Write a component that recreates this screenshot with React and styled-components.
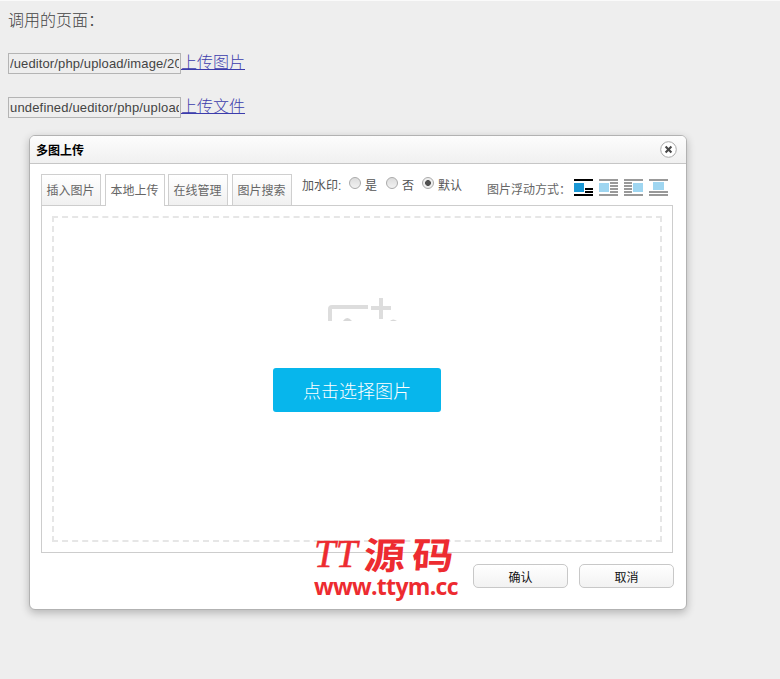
import React from "react";
import styled, { createGlobalStyle } from "styled-components";

const GlobalStyle = createGlobalStyle`
  * { box-sizing: border-box; }
  body {
    margin: 0;
    background: #eeeeee;
    font-family: "Liberation Sans", "Noto Sans CJK SC", sans-serif;
    overflow: hidden;
  }
`;

const Page = styled.main`
  position: relative;
  height: 679px;
  padding: 9px 8px;
  border-top: 1px solid #fafafa;
  color: #444;
`;

const Intro = styled.p`
  margin: 0 0 20px;
  height: 23px;
  font-size: 16px;
  line-height: 21px;
  font-weight: 300;
`;

const UploadRow = styled.div`
  display: flex;
  height: 21px;
  margin-bottom: 23px;
`;

const PathInput = styled.input`
  width: 173px;
  height: 21px;
  padding: 0 1px;
  border: 1px solid #b4b4b4;
  background: transparent;
  color: #444;
  font: 13px "Liberation Sans", sans-serif;
  letter-spacing: ${(p) => p.$tracking || "0"};
`;

const UploadLink = styled.a`
  font-size: 16px;
  font-weight: 300;
  line-height: 20px;
  color: #3c3cac;
  text-decoration: underline;
`;

const Dialog = styled.section`
  position: absolute;
  left: 29px;
  top: 134px;
  width: 658px;
  height: 475px;
  display: flex;
  flex-direction: column;
  background: #fff;
  border: 1px solid #b2b2b2;
  border-radius: 6px;
  box-shadow: 0 3px 8px rgba(0, 0, 0, 0.24);
`;

const TitleBar = styled.header`
  display: flex;
  align-items: center;
  justify-content: space-between;
  flex: none;
  height: 28px;
  padding: 0 9px 0 6px;
  border-bottom: 1px solid #c6c6c6;
  border-radius: 5px 5px 0 0;
  background: linear-gradient(#fdfdfd, #f0f0f0);
`;

const Title = styled.h1`
  margin: 0;
  padding-top: 2px;
  color: #000;
  font-size: 12px;
  font-weight: 700;
  line-height: 18px;
`;

const CloseButton = styled.button`
  display: flex;
  width: 17px;
  height: 17px;
  padding: 0;
  border: 0;
  background: none;
  svg { width: 17px; height: 17px; }
`;

const Body = styled.div`
  display: flex;
  flex-direction: column;
  padding: 10px 13px 0 11px;
`;

const TabStrip = styled.nav`
  display: flex;
  height: 31px;
`;

const Tab = styled.button`
  flex: none;
  width: 60px;
  height: ${(p) => (p.$active ? 32 : 31)}px;
  margin-right: ${(p) => p.$gap || 4}px;
  padding: ${(p) => (p.$active ? 0 : 2)}px 1px 0 0;
  border: 1px solid #cfcfcf;
  border-bottom: 0;
  background: ${(p) => (p.$active ? "#fff" : "linear-gradient(#fff, #f0f0f0)")};
  color: #666;
  font: 12px "Liberation Sans", "Noto Sans CJK SC", sans-serif;
  line-height: 28px;
  white-space: nowrap;
  position: relative;
  z-index: 1;
`;

const Watermark = styled.div`
  display: flex;
  height: 22px;
  margin-left: 6px;
  color: #555;
  font-size: 12px;
  line-height: 24px;
`;

const OptionCaption = styled.span`
  width: 47px;
`;

const Choice = styled.label`
  display: flex;
  width: ${(p) => p.$width}px;
  gap: 4px;
  white-space: nowrap;
`;

const Radio = styled.span`
  flex: none;
  width: 12px;
  height: 12px;
  margin-top: 3px;
  border: 1px solid #aaa;
  border-radius: 50%;
  background: ${(p) =>
    p.$checked
      ? "radial-gradient(circle, #505050 0 2.6px, #eee 3.2px)"
      : "linear-gradient(#dcdcdc, #f2f2f2)"};
`;

const FloatBar = styled.div`
  display: flex;
  margin-left: auto;
  padding-right: 5px;
  color: #666;
  font-size: 12px;
  line-height: 32px;
`;

const FloatCaption = styled.span`
  width: 87px;
  white-space: nowrap;
`;

const FloatIcons = styled.div`
  display: flex;
  gap: 6px;
  padding-top: 5px;
  svg { width: 19px; height: 17px; }
`;

const Panel = styled.div`
  width: 632px;
  height: 348px;
  padding: 10px;
  border: 1px solid #cdcdcd;
`;

const DropZone = styled.div`
  height: 326px;
  display: flex;
  flex-direction: column;
  align-items: center;
  padding-top: 79px;
  border: 2px dashed #e6e6e6;
`;

const Artwork = styled.svg`
  width: 70px;
  height: 26px;
  margin-left: 11px;
`;

const SelectButton = styled.button`
  width: 168px;
  height: 44px;
  margin-top: 45px;
  padding: 0 0 1px;
  border: 0;
  border-radius: 3px;
  background: #07b6ec;
  color: #fff;
  font: 300 18px "Noto Sans CJK SC", sans-serif;
`;

const Actions = styled.footer`
  display: flex;
  justify-content: flex-end;
  gap: 11px;
  padding: 11px 12px 0 0;
`;

const ActionButton = styled.button`
  width: 95px;
  height: 24px;
  padding: 0;
  border: 1px solid #c8c8c8;
  border-radius: 5px;
  background: linear-gradient(#fff, #f2f2f2);
  color: #111;
  font: 12px "Noto Sans CJK SC", sans-serif;
`;

const Stamp = styled.div`
  position: absolute;
  left: 314px;
  top: 534px;
  width: 146px;
  color: #ed2b30;
`;

const StampName = styled.div`
  display: flex;
  height: 39px;
  white-space: nowrap;
`;

const StampLatin = styled.span`
  width: 50px;
  font: italic 39px/38px "Liberation Serif", serif;
  -webkit-text-stroke: 0.5px #ed2b30;
`;

const StampHan = styled.span`
  font-family: "Noto Sans CJK SC", sans-serif;
  font-size: 37px;
  font-weight: 700;
  letter-spacing: 6px;
  line-height: 37px;
  transform: skewX(-4deg) scaleX(1.12);
  transform-origin: left center;
`;

const StampUrl = styled.div`
  font: 700 23px/24px "Open Sans", sans-serif;
  letter-spacing: -0.7px;
  white-space: nowrap;
`;

const floatModes = [
  {
    name: "default",
    line: "#000",
    fill: "#1b98d5",
    image: [0, 4, 10, 9],
    bars: [[0, 0, 19], [11, 9, 8], [11, 12, 8], [0, 15, 19]],
  },
  {
    name: "left",
    line: "#999",
    fill: "#9fd6f1",
    image: [0, 4, 10, 9],
    bars: [[0, 0, 19], [11, 3, 8], [11, 6, 8], [11, 9, 8], [11, 12, 8], [0, 15, 19]],
  },
  {
    name: "right",
    line: "#999",
    fill: "#9fd6f1",
    image: [9, 4, 10, 9],
    bars: [[0, 0, 19], [0, 3, 8], [0, 6, 8], [0, 9, 8], [0, 12, 8], [0, 15, 19]],
  },
  {
    name: "center",
    line: "#999",
    fill: "#9fd6f1",
    image: [4, 3, 11, 8],
    bars: [[0, 0, 19], [0, 12, 19], [0, 15, 19]],
  },
];

function FloatIcon({ mode }) {
  const [x, y, w, h] = mode.image;
  return (
    <svg viewBox="0 0 19 17" shapeRendering="crispEdges" aria-label={mode.name}>
      <rect x={x} y={y} width={w} height={h} fill={mode.fill} />
      {mode.bars.map(([bx, by, bw]) => (
        <rect key={`${bx}-${by}`} x={bx} y={by} width={bw} height="2" fill={mode.line} />
      ))}
    </svg>
  );
}

export default function App() {
  return (
    <>
      <GlobalStyle />
      <Page>
        <Intro>调用的页面：</Intro>
        <UploadRow>
          <PathInput readOnly value="/ueditor/php/upload/image/2016" $tracking="0.12px" />
          <UploadLink>上传图片</UploadLink>
        </UploadRow>
        <UploadRow>
          <PathInput readOnly value="undefined/ueditor/php/upload/file" $tracking="0.17px" />
          <UploadLink>上传文件</UploadLink>
        </UploadRow>

        <Dialog>
          <TitleBar>
            <Title>多图上传</Title>
            <CloseButton aria-label="close">
              <svg viewBox="0 0 17 17">
                <circle cx="8.5" cy="8.5" r="7.8" fill="#fff" stroke="#aaa" />
                <path d="M5.6 5.6 11.4 11.4M11.4 5.6 5.6 11.4" stroke="#484848" strokeWidth="2.1" />
              </svg>
            </CloseButton>
          </TitleBar>
          <Body>
            <TabStrip>
              <Tab>插入图片</Tab>
              <Tab $active $gap={3}>本地上传</Tab>
              <Tab>在线管理</Tab>
              <Tab>图片搜索</Tab>
              <Watermark>
                <OptionCaption>加水印:</OptionCaption>
                <Choice $width={37}><Radio />是</Choice>
                <Choice $width={36}><Radio />否</Choice>
                <Choice $width={42}><Radio $checked />默认</Choice>
              </Watermark>
              <FloatBar>
                <FloatCaption>图片浮动方式：</FloatCaption>
                <FloatIcons>
                  {floatModes.map((mode) => <FloatIcon key={mode.name} mode={mode} />)}
                </FloatIcons>
              </FloatBar>
            </TabStrip>
            <Panel>
              <DropZone>
                <Artwork viewBox="0 0 70 26">
                  <path d="M2 24V12Q2 10 4 10H40" fill="none" stroke="#ddd" strokeWidth="4" />
                  <path d="M43 11H63M53 1V22" fill="none" stroke="#ddd" strokeWidth="4" />
                  <path d="M15 24Q19 18 24 24ZM62 24Q65 21 69 24Z" fill="#d8d8d8" />
                </Artwork>
                <SelectButton>点击选择图片</SelectButton>
              </DropZone>
            </Panel>
          </Body>
          <Actions>
            <ActionButton>确认</ActionButton>
            <ActionButton>取消</ActionButton>
          </Actions>
        </Dialog>

        <Stamp>
          <StampName>
            <StampLatin>TT</StampLatin>
            <StampHan>源码</StampHan>
          </StampName>
          <StampUrl>www.ttym.cc</StampUrl>
        </Stamp>
      </Page>
    </>
  );
}
